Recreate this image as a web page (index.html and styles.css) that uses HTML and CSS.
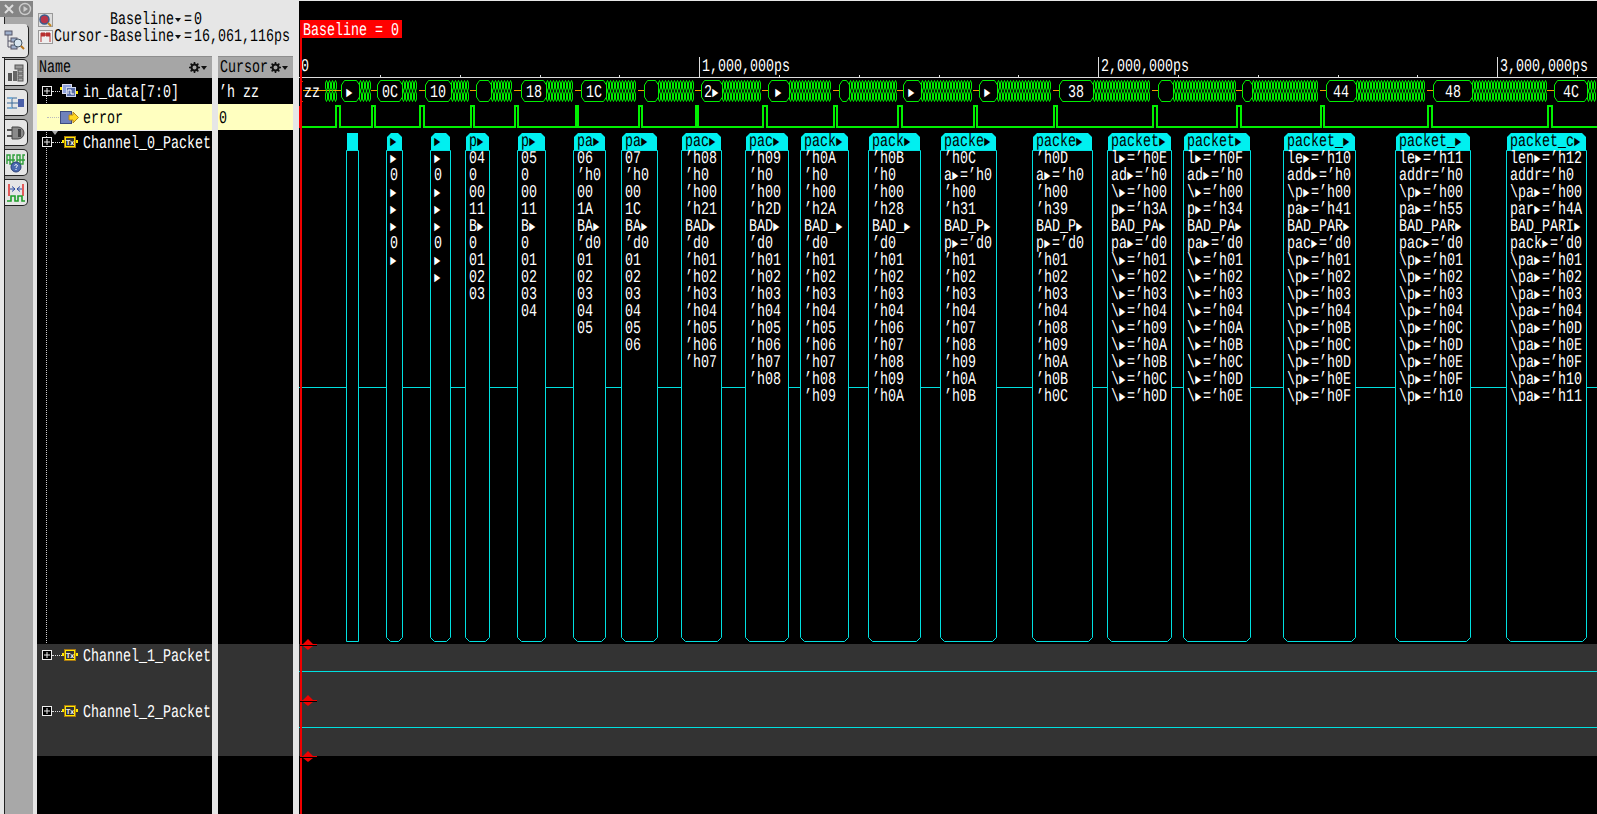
FILE: index.html
```html
<!DOCTYPE html>
<html>
<head>
<meta charset="utf-8">
<title>Waveform viewer</title>
<link rel="stylesheet" href="styles.css">
</head>
<body>

<svg class="defs" width="0" height="0">
  <symbol id="expander" viewBox="0 0 10 10">
    <rect x="0.5" y="0.5" width="9" height="9" fill="#000" stroke="#eee"/>
    <path d="M2 5H8M5 2V8" stroke="#eee"/>
  </symbol>
  <symbol id="gear" viewBox="0 0 11 11">
    <circle cx="5.5" cy="5.5" r="3" fill="none" stroke="#111" stroke-width="2"/>
    <path d="M5.5 0V11M0 5.5H11M1.6 1.6L9.4 9.4M9.4 1.6L1.6 9.4" stroke="#111" stroke-width="1.6" stroke-dasharray="2 7 2"/>
  </symbol>
</svg>

<div class="rail">
  <div class="rail-head">
    <svg width="14" height="14" viewBox="0 0 14 14"><path d="M3 3L11 11M11 3L3 11" stroke="#ddd" stroke-width="2"/></svg>
    <svg width="14" height="14" viewBox="0 0 14 14"><circle cx="7" cy="7" r="5.5" fill="none" stroke="#ccc" stroke-width="1.4"/><path d="M5.5 4L10 7L5.5 10Z" fill="#ccc"/></svg>
  </div>
  <div class="rail-body">
    <div class="tab tab-on">
      <svg width="22" height="22" viewBox="0 0 22 22">
        <rect x="1" y="1" width="7" height="4" fill="#9fb0cc" stroke="#556"/>
        <path d="M4 5V17H8M4 11H8" fill="none" stroke="#556"/>
        <rect x="7" y="8" width="6" height="4" fill="#9fb0cc" stroke="#556"/>
        <rect x="7" y="15" width="6" height="4" fill="#9fb0cc" stroke="#556"/>
        <circle cx="14" cy="13" r="4" fill="#d8e6f0" stroke="#456"/>
        <path d="M17 16L20 19" stroke="#b8741a" stroke-width="2"/>
      </svg>
    </div>
    <div class="tab">
      <svg width="18" height="18" viewBox="0 0 18 18">
        <rect x="8" y="1" width="8" height="4" fill="#999" stroke="#555"/>
        <rect x="11" y="6" width="5" height="3" fill="#aaa" stroke="#555"/>
        <rect x="11" y="10" width="5" height="3" fill="#aaa" stroke="#555"/>
        <rect x="11" y="14" width="5" height="3" fill="#aaa" stroke="#555"/>
        <rect x="1" y="9" width="4" height="8" fill="#555"/>
        <rect x="6" y="7" width="4" height="10" fill="#666"/>
      </svg>
    </div>
    <div class="tab">
      <svg width="18" height="18" viewBox="0 0 18 18">
        <path d="M0 4H10M0 9H12M0 14H10M5 4V14" stroke="#3a6a9a" fill="none"/>
        <rect x="2" y="3" width="3" height="2" fill="#7ab0d8"/>
        <rect x="2" y="13" width="3" height="2" fill="#7ab0d8"/>
        <rect x="11" y="5" width="6" height="8" fill="#4a5fa8"/>
      </svg>
    </div>
    <div class="tab">
      <svg width="18" height="18" viewBox="0 0 18 18">
        <path d="M0 6H6M0 12H6" stroke="#555" stroke-width="2"/>
        <path d="M5 3H11A6 6 0 0 1 11 15H5Z" fill="#8a8a8a" stroke="#444"/>
        <rect x="11" y="5" width="3" height="8" fill="#444"/>
      </svg>
    </div>
    <div class="tab">
      <svg width="20" height="20" viewBox="0 0 20 20">
        <path d="M1 7V2H4V7H7V2H9M11 7V2H14V7H17V2H19M1 11V7H4V11H7V7H9M11 11V7H14V11H17V7H19" fill="none" stroke="#2e9e3a" stroke-width="1.4"/>
        <circle cx="10" cy="14" r="5" fill="#4a6ab0" stroke="#2a3f78"/>
        <path d="M8.5 12.5Q10 10.5 11.5 12.5Q11.5 13.5 10 14.5V15M10 16V17" fill="none" stroke="#fff"/>
      </svg>
    </div>
    <div class="tab">
      <svg width="20" height="20" viewBox="0 0 20 20">
        <path d="M3 1V13M17 1V13" stroke="#e02020" stroke-width="1.4"/>
        <path d="M4 6H9M9 6L6 3.5M9 6L6 8.5M16 6H11M11 6L14 3.5M11 6L14 8.5" fill="none" stroke="#2a4aa0"/>
        <path d="M1 18H5V13H9V18H12V13H16V18H19" fill="none" stroke="#1f9e2a" stroke-width="1.6"/>
      </svg>
    </div>
  </div>
</div>

<div class="side">
  <div class="readout">
    <svg width="15" height="14" viewBox="0 0 15 14">
      <rect x="0.5" y="0.5" width="14" height="13" fill="#ddd" stroke="#999"/>
      <circle cx="6.5" cy="6.5" r="4.5" fill="#b8354a" stroke="#3a5a8a" stroke-width="1.5"/>
      <path d="M10 10L13 13" stroke="#c8861a" stroke-width="2"/>
    </svg>
    <span class="lbl readout-first">Baseline</span>
    <span class="caret caret-readout"></span>
    <span class="lbl">=</span>
    <span class="lbl">0</span>

    <svg width="15" height="14" viewBox="0 0 15 14">
      <rect x="0.5" y="0.5" width="14" height="13" fill="#eee" stroke="#999"/>
      <path d="M3 12V3H7V6H3M12 12V3H8V6H12" fill="#b83030" stroke="#b83030"/>
    </svg>
    <span class="lbl">Cursor-Baseline</span>
    <span class="caret caret-readout"></span>
    <span class="lbl">=</span>
    <span class="lbl">16,061,116ps</span>
  </div>

  <div class="columns">
    <div class="col col-names">
      <div class="col-head">
        <span class="lbl">Name</span>
        <svg class="gear"><use href="#gear"/></svg><span class="caret"></span>
      </div>
      <div class="rows">
        <div class="tree-line"></div>
        <div class="row row-top">
          <svg class="exp"><use href="#expander"/></svg>
          <span class="stem stem-bus"></span>
          <svg class="icon-bus" width="18" height="14" viewBox="0 0 18 14">
            <rect x="0" y="3" width="4" height="3" fill="#ffe800"/>
            <rect x="14" y="7" width="4" height="3" fill="#ffe800"/>
            <rect x="2.5" y="0.5" width="9" height="9" fill="#8fa2dc" stroke="#dde"/>
            <rect x="6.5" y="3.5" width="9" height="9" fill="#5b6fa8" stroke="#cdd6ee"/>
            <path d="M8 10V6H11V10H14" fill="none" stroke="#fff"/>
          </svg>
          <span class="lbl name-text">in_data[7:0]</span>
        </div>
        <div class="row row-top row-sel">
          <span class="stem stem-sel"></span>
          <svg class="icon-sig" width="19" height="13" viewBox="0 0 19 13">
            <rect x="0.5" y="0.5" width="11" height="12" fill="#6f82bc" stroke="#3d4c80"/>
            <path d="M9 4H13V1L18.5 6.5L13 12V9H9Z" fill="#ffd820" stroke="#b8861a"/>
          </svg>
          <span class="lbl name-text">error</span>
        </div>
        <div class="row row-ch0">
          <span class="drop-mark"></span>
          <svg class="exp"><use href="#expander"/></svg>
          <span class="stem stem-tx"></span>
          <svg class="icon-tx" viewBox="0 0 16 12">
            <rect x="0" y="4" width="16" height="3" fill="#ffe800"/>
            <rect x="2.5" y="0.5" width="11" height="11" fill="#222" stroke="#a87a10"/>
            <rect x="3.5" y="1.5" width="9" height="9" fill="#333" stroke="#ffe800"/>
            <text x="8" y="8.5" class="tx-text">Tx</text>
          </svg>
          <span class="lbl name-text">Channel_0_Packet</span>
        </div>
        <div class="row row-dim">
          <svg class="exp"><use href="#expander"/></svg>
          <span class="stem stem-tx"></span>
          <svg class="icon-tx" viewBox="0 0 16 12">
            <rect x="0" y="4" width="16" height="3" fill="#ffe800"/>
            <rect x="2.5" y="0.5" width="11" height="11" fill="#222" stroke="#a87a10"/>
            <rect x="3.5" y="1.5" width="9" height="9" fill="#333" stroke="#ffe800"/>
            <text x="8" y="8.5" class="tx-text">Tx</text>
          </svg>
          <span class="lbl name-text">Channel_1_Packet</span>
        </div>
        <div class="row row-dim">
          <svg class="exp"><use href="#expander"/></svg>
          <span class="stem stem-tx"></span>
          <svg class="icon-tx" viewBox="0 0 16 12">
            <rect x="0" y="4" width="16" height="3" fill="#ffe800"/>
            <rect x="2.5" y="0.5" width="11" height="11" fill="#222" stroke="#a87a10"/>
            <rect x="3.5" y="1.5" width="9" height="9" fill="#333" stroke="#ffe800"/>
            <text x="8" y="8.5" class="tx-text">Tx</text>
          </svg>
          <span class="lbl name-text">Channel_2_Packet</span>
        </div>
      </div>
    </div>

    <div class="col col-values">
      <div class="col-head">
        <span class="lbl">Cursor</span>
        <svg class="gear"><use href="#gear"/></svg><span class="caret"></span>
      </div>
      <div class="rows">
        <div class="row row-top"><span class="lbl">’h zz</span></div>
        <div class="row row-top row-sel"><span class="lbl">0</span></div>
        <div class="row row-ch0 row-plain"></div>
        <div class="row row-dim"></div>
        <div class="row row-dim"></div>
      </div>
    </div>
  </div>
</div>

<div class="wave">
  <svg id="canvas" width="1298" height="813" viewBox="299 1 1298 813"></svg>
</div>

<script src="wave.js"></script>
</body>
</html>
```

FILE: styles.css
```css
html, body {
  margin: 0;
  height: 100%;
  overflow: hidden;
}

body {
  display: flex;
  background: #e6e6e6;
  font-family: "Liberation Mono", "DejaVu Sans Mono", monospace;
  font-size: 18px;
  color: #fff;
  text-rendering: geometricPrecision;
}

.defs {
  position: absolute;
}

/* squeezed to the 8px cell of the bitmap font */
.lbl {
  display: inline-block;
  line-height: 22px;
  white-space: nowrap;
  transform: scaleX(.741);
  transform-origin: 0 50%;
}

/* left rail */
.rail {
  width: 33px;
  margin-right: 4px;
  display: flex;
  flex-direction: column;
  padding-top: 1px;
}

.rail-head {
  height: 16px;
  background: #858585;
  display: flex;
  align-items: center;
  gap: 2px;
  padding-left: 2px;
}

.rail-body {
  flex: 1;
  margin-left: 4px;
  border-left: 1px solid #222;
  background: #a8a8a8;
  padding-top: 7px;
  display: flex;
  flex-direction: column;
  gap: 3px;
}

.tab {
  width: 23px;
  height: 27px;
  box-sizing: border-box;
  background: #e6e6e6;
  border: 1px solid #222;
  border-left: 0;
  border-radius: 0 5px 5px 0;
  display: flex;
  align-items: center;
  justify-content: center;
}

.tab-on {
  width: 27px;
  height: 34px;
  margin: 0 0 -2px -3px;
  border-color: transparent #222 #222 transparent;
  border-style: solid;
  position: relative;
}

/* name and value columns */
.side {
  width: 256px;
  display: flex;
  flex-direction: column;
  color: #000;
}

.readout {
  height: 56px;
  box-sizing: border-box;
  padding: 11px 0 0 1px;
  display: grid;
  grid-template-columns: 16px 120px 10px 10px 1fr;
  grid-auto-rows: 17px;
  align-items: center;
  justify-items: start;
}

.readout-first {
  margin-left: 56px;
}

.columns {
  flex: 1;
  display: flex;
  gap: 6px;
}

.col {
  display: flex;
  flex-direction: column;
  overflow: hidden;
}

.col-names {
  width: 175px;
}

.col-values {
  width: 75px;
}

.col-head {
  height: 22px;
  flex: none;
  background: #a6a6a6;
  border-top: 1px solid #8e8e8e;
  box-sizing: border-box;
  display: flex;
  align-items: center;
  padding-left: 2px;
  overflow: hidden;
}

.col-head .lbl {
  flex: 1;
  width: 0;
}

.gear {
  flex: none;
  width: 11px;
  height: 11px;
}

.caret {
  width: 0;
  height: 0;
  margin: 0 5px 0 1px;
  border-left: 3px solid transparent;
  border-right: 3px solid transparent;
  border-top: 4px solid #111;
}

.caret-readout {
  margin: 0 0 0 1px;
}

.rows {
  flex: 1;
  position: relative;
  background: #000;
  color: #fff;
}

.tree-line {
  position: absolute;
  left: 9px;
  top: 16px;
  height: 617px;
  border-left: 1px dotted #ccc;
}

.row {
  display: flex;
  align-items: flex-start;
  position: relative;
  padding-left: 5px;
  overflow: hidden;
}

.row-top {
  height: 26px;
  align-items: center;
}

.row .lbl {
  margin-top: 2px;
}

.row-top .lbl {
  margin-top: 4px;
}

.row-sel {
  background: #ffffc0;
  color: #000;
}

.row-ch0 {
  height: 514px;
  border-top: 1px solid #eee;
  box-sizing: border-box;
}

.row-plain {
  border-top: 0;
}

.row-dim {
  height: 56px;
  background: #333;
}

.col-values .row {
  padding-left: 1px;
}

.exp {
  flex: none;
  width: 10px;
  height: 10px;
}

.row-ch0 .exp,
.row-dim .exp {
  margin-top: 6px;
}

.stem {
  flex: none;
  height: 0;
  border-top: 1px dotted #ddd;
}

.stem-bus {
  width: 8px;
}

.stem-tx {
  width: 10px;
  margin-top: 11px;
}

.stem-sel {
  width: 14px;
  margin-left: 5px;
  border-top-color: #bbb;
}

.icon-bus,
.icon-sig {
  flex: none;
}

.icon-sig {
  margin-left: -1px;
}

.icon-tx {
  flex: none;
  width: 16px;
  height: 12px;
  margin: 5px 0 0 0;
}

.name-text {
  margin-left: 5px;
}

.icon-sig + .name-text {
  margin-left: 4px;
}

.drop-mark {
  position: absolute;
  left: 15px;
  top: 0;
  width: 0;
  height: 0;
  border-left: 3px solid transparent;
  border-right: 3px solid transparent;
  border-top: 4px solid #aaa;
}

.tx-text {
  font-family: "Liberation Sans", sans-serif;
  font-size: 7px;
  font-weight: bold;
  fill: #fff;
  text-anchor: middle;
}

/* waveform canvas */
.wave {
  flex: 1;
  margin-left: 6px;
  padding-top: 1px;
  background: #e6e6e6;
}

#canvas {
  display: block;
  background: #000;
}

#canvas text {
  font-family: "Liberation Mono", "DejaVu Sans Mono", monospace;
  font-size: 18px;
  fill: #fff;
}

#canvas .on-head {
  fill: #000;
}

/* truncation mark: smaller glyph, same 8px cell */
#canvas .tri {
  font-size: 14px;
  letter-spacing: 2.4px;
}

.band {
  fill: #333;
}

.baseline-box {
  fill: #ff0000;
}

.ruler,
.tick {
  stroke: #ddd;
  fill: none;
  shape-rendering: crispEdges;
}

.bus {
  stroke: #00f000;
  fill: none;
}

.box {
  stroke: #00f000;
  fill: #000;
}

.stub {
  stroke: #f0a000;
  fill: none;
  shape-rendering: crispEdges;
}

.bracket {
  stroke: #f03000;
  fill: none;
  shape-rendering: crispEdges;
}

.pulse {
  stroke: #00f000;
  stroke-width: 2;
  fill: none;
  shape-rendering: crispEdges;
}

.err-mark {
  fill: #ff0000;
}

.cyan-line {
  stroke: #00e0e0;
  fill: none;
  shape-rendering: crispEdges;
}

.pkt-body {
  stroke: #00e0e0;
  fill: #000;
}

.pkt-head {
  fill: #00f0f0;
}

.cursor {
  stroke: #f00000;
  stroke-width: 2;
  shape-rendering: crispEdges;
}

.marker-line {
  stroke: #f00000;
  shape-rendering: crispEdges;
}

.marker-shade {
  stroke: #000;
  shape-rendering: crispEdges;
}

.marker-tip {
  fill: #f00000;
}
```

FILE: wave.js
```js
var TRI = "\u25ba";
var PITCH = 17;
var SQUEEZE = 0.741;
var parts = [];

function text(x, y, str, cls) {
  var safe = str.replace(/'/g, "\u2019").replace(/&/g, "&amp;").replace(/</g, "&lt;")
    .replace(/\u25ba/g, '<tspan class="tri">\u25ba</tspan>');
  parts.push('<text transform="matrix(' + SQUEEZE + " 0 0 1 " + x + " " + y + ')" class="' + (cls || "") + '">' + safe + "</text>");
}

function shape(d, cls) {
  parts.push('<path d="' + d + '" class="' + cls + '"/>');
}

// ruler
parts.push('<rect x="299" y="644" width="1298" height="112" class="band"/>');
shape("M299 77.5H1597", "ruler");
for (var t = 380; t < 1597; t += 79.8) {
  var tx = Math.round(t) + 0.5;
  var major = (tx > 698 && tx < 700) || (tx > 1097 && tx < 1099) || (tx > 1496 && tx < 1498);
  shape("M" + tx + " " + (major ? 57 : 75) + "V77", "tick");
}
text(301, 71, "0");
text(702, 71, "1,000,000ps");
text(1101, 71, "2,000,000ps");
text(1500, 71, "3,000,000ps");

// baseline flag
parts.push('<rect x="300" y="20" width="102" height="18" class="baseline-box"/>');
text(303, 35, "Baseline = 0");

// in_data bus: [pulse start, pulse end, box start, box end, label]
var beats = [
  [336, 340, 341, 359, TRI], [372, 375, 377, 402, "0C"], [420, 424, 425, 451, "10"],
  [471, 474, 476, 491, ""], [515, 518, 521, 546, "18"], [576, 578, 581, 606, "1C"],
  [639, 642, 644, 658, ""], [696, 698, 701, 722, "2" + TRI], [763, 767, 768, 789, TRI],
  [834, 837, 839, 849, ""], [898, 902, 903, 921, TRI], [974, 977, 979, 997, TRI],
  [1054, 1057, 1059, 1093, "38"], [1153, 1157, 1158, 1173, ""], [1237, 1241, 1242, 1252, ""],
  [1321, 1324, 1326, 1356, "44"], [1428, 1432, 1433, 1472, "48"], [1548, 1552, 1554, 1587, "4C"]
];

// unknown-value stretch: narrow closed lobes, pinched at mid height
function wiggle(from, to) {
  var d = "";
  for (var x = from; x + 3 <= to; x += 3) {
    var a = x + 0.5, b = x + 2.5, m = x + 1.5;
    d += "M" + m + " 80.5L" + a + " 83V88L" + m + " 91L" + a + " 94V99L" + m + " 101.5L" + b + " 99V94L" + m + " 91L" + b + " 88V83Z";
  }
  shape(d, "bus");
}

shape("M303 81H301V101H303", "bracket");
shape("M303 90.5H341", "stub");
text(304, 97, "zz");
wiggle(325, 337);

var pulse = "M302 127";
beats.forEach(function (b, i) {
  var next = beats[i + 1] ? beats[i + 1][0] : 1597;
  pulse += "H" + b[0] + "V106H" + b[1] + "V127";
  shape("M" + (b[0] - 1) + " 90.5H" + b[2], "stub");
  var l = b[2] + 0.5, r = b[3] + 0.5;
  shape("M" + l + " 85L" + (l + 3) + " 80.5H" + (r - 3) + "L" + r + " 85V97L" + (r - 3) + " 101.5H" + (l + 3) + "L" + l + " 97Z", "box");
  if (b[4]) {
    text(Math.round((b[2] + b[3]) / 2 - b[4].length * 4), 97, b[4]);
  }
  wiggle(b[3], next - 1);
});
shape(pulse + "H1597", "pulse");
parts.push('<rect x="299" y="106" width="3" height="22" class="err-mark"/>');

// gap lines behind the transaction boxes
shape("M299 387.5H1597", "cyan-line");
shape("M299 671.5H1597", "cyan-line");
shape("M299 727.5H1597", "cyan-line");

function col(l, r, head, lines) {
  return { l: l, r: r, head: head, lines: lines };
}

// six fixed fields, then the payload bytes with a shared prefix
function fields(pre, a, b, c, d, e, f, tail) {
  return [a, b, c, d, e, f].concat(tail.split(" ").map(function (v) { return pre + "h" + v; }));
}

var cols = [
  col(386, 402, TRI, [TRI, "0", TRI, TRI, TRI, "0", TRI]),
  col(430, 450, TRI, [TRI, "0", TRI, TRI, TRI, "0", TRI, TRI]),
  col(465, 489, "p" + TRI, ["04", "0", "00", "11", "B" + TRI, "0", "01", "02", "03"]),
  col(517, 545, "p" + TRI, ["05", "0", "00", "11", "B" + TRI, "0", "01", "02", "03", "04"]),
  col(573, 605, "pa" + TRI, ["06", "'h0", "00", "1A", "BA" + TRI, "'d0", "01", "02", "03", "04", "05"]),
  col(621, 657, "pa" + TRI, ["07", "'h0", "00", "1C", "BA" + TRI, "'d0", "01", "02", "03", "04", "05", "06"]),
  col(681, 721, "pac" + TRI, fields("'", "'h08", "'h0", "'h00", "'h21", "BAD" + TRI, "'d0", "01 02 03 04 05 06 07")),
  col(745, 788, "pac" + TRI, fields("'", "'h09", "'h0", "'h00", "'h2D", "BAD" + TRI, "'d0", "01 02 03 04 05 06 07 08")),
  col(800, 848, "pack" + TRI, fields("'", "'h0A", "'h0", "'h00", "'h2A", "BAD_" + TRI, "'d0", "01 02 03 04 05 06 07 08 09")),
  col(868, 920, "pack" + TRI, fields("'", "'h0B", "'h0", "'h00", "'h28", "BAD_" + TRI, "'d0", "01 02 03 04 06 07 08 09 0A")),
  col(940, 996, "packe" + TRI, fields("'", "'h0C", "a" + TRI + "='h0", "'h00", "'h31", "BAD_P" + TRI, "p" + TRI + "='d0", "01 02 03 04 07 08 09 0A 0B")),
  col(1032, 1092, "packe" + TRI, fields("'", "'h0D", "a" + TRI + "='h0", "'h00", "'h39", "BAD_P" + TRI, "p" + TRI + "='d0", "01 02 03 04 08 09 0A 0B 0C")),
  col(1107, 1171, "packet" + TRI, fields("\\" + TRI + "='", "l" + TRI + "='h0E", "ad" + TRI + "='h0", "\\" + TRI + "='h00", "p" + TRI + "='h3A", "BAD_PA" + TRI, "pa" + TRI + "='d0", "01 02 03 04 09 0A 0B 0C 0D")),
  col(1183, 1250, "packet" + TRI, fields("\\" + TRI + "='", "l" + TRI + "='h0F", "ad" + TRI + "='h0", "\\" + TRI + "='h00", "p" + TRI + "='h34", "BAD_PA" + TRI, "pa" + TRI + "='d0", "01 02 03 04 0A 0B 0C 0D 0E")),
  col(1283, 1355, "packet_" + TRI, fields("\\p" + TRI + "='", "le" + TRI + "='h10", "add" + TRI + "='h0", "\\p" + TRI + "='h00", "pa" + TRI + "='h41", "BAD_PAR" + TRI, "pac" + TRI + "='d0", "01 02 03 04 0B 0C 0D 0E 0F")),
  col(1395, 1470, "packet_" + TRI, fields("\\p" + TRI + "='", "le" + TRI + "='h11", "addr='h0", "\\p" + TRI + "='h00", "pa" + TRI + "='h55", "BAD_PAR" + TRI, "pac" + TRI + "='d0", "01 02 03 04 0C 0D 0E 0F 10")),
  col(1506, 1586, "packet_c" + TRI, fields("\\pa" + TRI + "='", "len" + TRI + "='h12", "addr='h0", "\\pa" + TRI + "='h00", "par" + TRI + "='h4A", "BAD_PARI" + TRI, "pack" + TRI + "='d0", "01 02 03 04 0D 0E 0F 10 11"))
];

// first transaction is too narrow to hold anything
shape("M346.5 150.5H358.5V641.5H346.5Z", "pkt-body");
parts.push('<rect x="347" y="133" width="11" height="17" class="pkt-head"/>');

cols.forEach(function (c) {
  var l = c.l + 0.5, r = c.r + 0.5;
  shape("M" + l + " 150.5H" + r + "V637.5L" + (r - 4) + " 641.5H" + (l + 4) + "L" + l + " 637.5Z", "pkt-body");
  shape("M" + (c.l + 1) + " 150V137L" + (c.l + 5) + " 133H" + (c.r - 4) + "L" + c.r + " 137V150Z", "pkt-head");
  text(c.l + 4, 146, c.head, "on-head");
  c.lines.forEach(function (s, i) {
    text(c.l + 4, 163 + i * PITCH, s);
  });
});

// cursor and its group markers
shape("M301 20V814", "cursor");
[644, 700, 756].forEach(function (y) {
  shape("M300 " + (y + 0.5) + "H317", "marker-line");
  shape("M300 " + (y + 1.5) + "H317", "marker-shade");
  shape("M308 " + (y - 5) + "L313 " + y + "H303ZM303 " + (y + 2) + "H313L308 " + (y + 6) + "Z", "marker-tip");
});

document.getElementById("canvas").innerHTML = parts.join("");
```
